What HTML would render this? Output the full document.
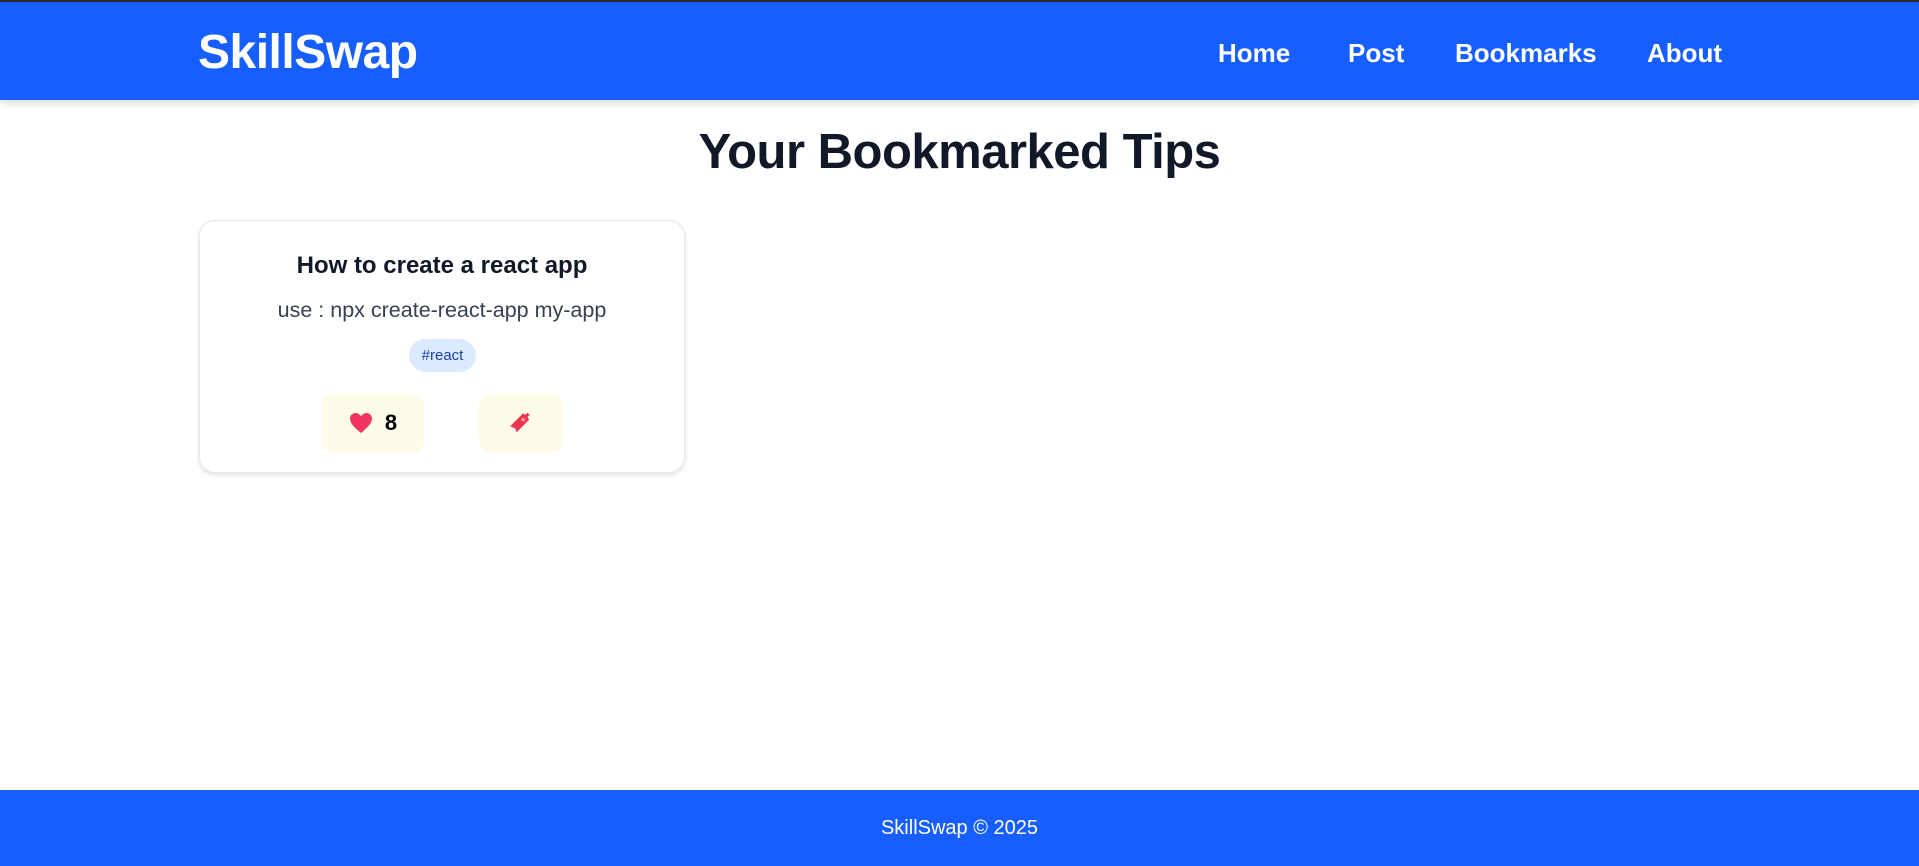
<!DOCTYPE html>
<html><head><meta charset="utf-8"><style>
*{box-sizing:border-box;margin:0;padding:0}
body{width:1919px;height:864px;position:relative;background:#fff;font-family:"Liberation Sans",sans-serif;overflow:hidden}
.top{position:absolute;top:0;left:0;width:1919px;height:2px;background:#2a2a2a}
header{position:absolute;top:2px;left:0;width:1919px;height:98px;background:#175eff;box-shadow:0 3px 8px rgba(0,0,0,.15)}
.logo{position:absolute;left:198px;top:23px;color:#fff;font-size:48px;font-weight:bold;letter-spacing:-0.5px}
nav a{position:absolute;top:36px;color:#fff;font-size:26px;font-weight:bold;text-decoration:none}
h1{position:absolute;top:124px;width:100%;text-align:center;font-size:49px;color:#111827;letter-spacing:-0.5px}
.card{position:absolute;left:199px;top:220px;width:486px;height:253px;border:1px solid #e5e7eb;border-radius:16px;box-shadow:0 2px 5px rgba(0,0,0,.12);text-align:center}
.t{position:absolute;top:31px;width:100%;font-size:24px;font-weight:bold;color:#111827}
.d{position:absolute;top:77px;width:100%;font-size:21.5px;color:#374151}
.tag{position:absolute;left:209px;top:118px;width:67px;height:33px;border-radius:17px;background:#dbeafe;color:#1e40af;font-size:15px;line-height:33px}
.b{position:absolute;top:172px;height:60px;background:#fefbea;border-radius:12px;display:flex;align-items:center;justify-content:center;gap:12px;font-size:22px;color:#000;font-weight:bold}
footer{position:absolute;top:790px;left:0;width:1919px;height:76px;background:#175eff;color:#fff;font-size:20px;text-align:center;line-height:76px}
</style></head><body>
<div class="top"></div>
<header><div class="logo">SkillSwap</div>
<nav><a style="left:1218px">Home</a><a style="left:1348px">Post</a><a style="left:1455px">Bookmarks</a><a style="left:1647px">About</a></nav></header>
<h1>Your Bookmarked Tips</h1>
<div class="card">
<div class="t">How to create a react app</div>
<div class="d">use : npx create-react-app my-app</div>
<div class="tag">#react</div>
<div class="b" style="left:122px;width:102px"><svg width="24" height="22" viewBox="0 0 24 22"><path d="M12 21C5 15 1 11 1 6.5 1 3.5 3.5 1 6.5 1 9 1 11 2.5 12 4.5 13 2.5 15 1 17.5 1 20.5 1 23 3.5 23 6.5 23 11 19 15 12 21Z" fill="#f0345f"/></svg><span>8</span></div>
<div class="b" style="left:279px;width:84px"><svg width="26" height="26" viewBox="0 0 24 24"><path d="M2 15L14 3l2 1.5 2-2 2 2-2 2L19.5 9 8 20.5l-1.5-3.5L2 15Z" fill="#ef3552"/><circle cx="14" cy="9" r="1.6" fill="#ff9fb0"/></svg></div>
</div>
<footer>SkillSwap © 2025</footer>
</body></html>
